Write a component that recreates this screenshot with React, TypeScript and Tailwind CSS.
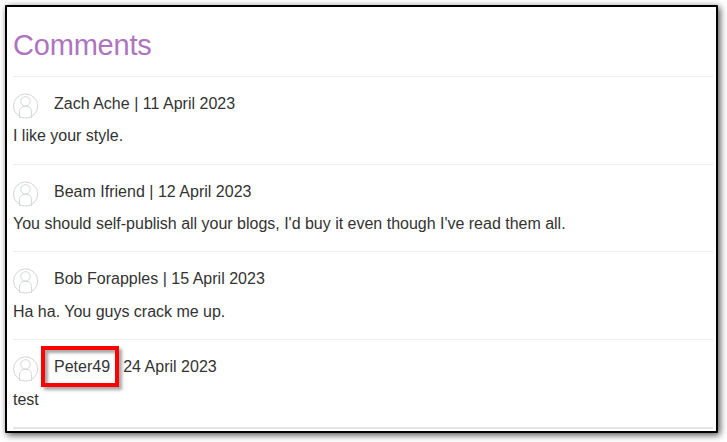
type Comment = { author: string; date: string; text: string; height: string; gap: string; marked?: boolean };

const comments: Comment[] = [
  { author: "Zach Ache", date: "11 April 2023", text: "I like your style.", height: "h-[88px]", gap: "mt-1" },
  { author: "Beam Ifriend", date: "12 April 2023", text: "You should self-publish all your blogs, I'd buy it even though I've read them all.", height: "h-[87px]", gap: "mt-1" },
  { author: "Bob Forapples", date: "15 April 2023", text: "Ha ha. You guys crack me up.", height: "h-[88px]", gap: "mt-[5px]" },
  { author: "Peter49", date: "24 April 2023", text: "test", height: "h-[88px]", gap: "mt-[5px]", marked: true },
];

function Avatar() {
  return (
    <svg className="mt-4 size-[26px] shrink-0" viewBox="0 0 26 26" fill="none" stroke="#d3d7d7" strokeWidth="1">
      <circle cx="12.6" cy="13" r="12.1" />
      <circle cx="12.5" cy="8.4" r="4.7" />
      <path d="M6.5 25V18.8C6.5 15.5 8.7 13.3 12.5 13.3S18.6 15.5 18.6 18.8V25" />
    </svg>
  );
}

function Row({ comment }: { comment: Comment }) {
  return (
    <article className={`relative border-t border-[#ebeeee] ${comment.height}`}>
      <div className="flex h-[43px] gap-[15px]">
        <Avatar />
        <p className="mt-[15px] leading-6 tracking-[0.01px] whitespace-pre">{comment.author} | {comment.date}</p>
      </div>
      <p className={`leading-6 tracking-[-0.01px] whitespace-pre ${comment.gap}`}>{comment.text}</p>
      {comment.marked && (
        <div className="absolute top-[6px] left-[28px] h-[41px] w-[78px] border-4 border-[#fe0000] shadow-[3px_3px_3px_rgba(0,0,0,0.35),inset_3px_3px_3px_rgba(0,0,0,0.35)]" />
      )}
    </article>
  );
}

export default function App() {
  return (
    <main className="h-[442px] w-[727px] overflow-hidden bg-white pt-[5px] pl-[5px] font-['Liberation_Sans',Arial,sans-serif] text-base text-[#333]">
      <section className="h-[428px] w-[713px] rounded-[1px] border-2 border-black bg-white pl-[6px] shadow-[2px_2px_7px_rgba(0,0,0,0.7)]">
        <div className="w-[700px]">
          <h1 className="h-[69px] pt-5 text-[29px] leading-9 tracking-[-0.2px] text-[#ae74c0]">Comments</h1>
          {comments.map((comment) => (
            <Row key={comment.author} comment={comment} />
          ))}
          <div className="h-[2px] bg-[#e5e5e5]" />
        </div>
      </section>
    </main>
  );
}
